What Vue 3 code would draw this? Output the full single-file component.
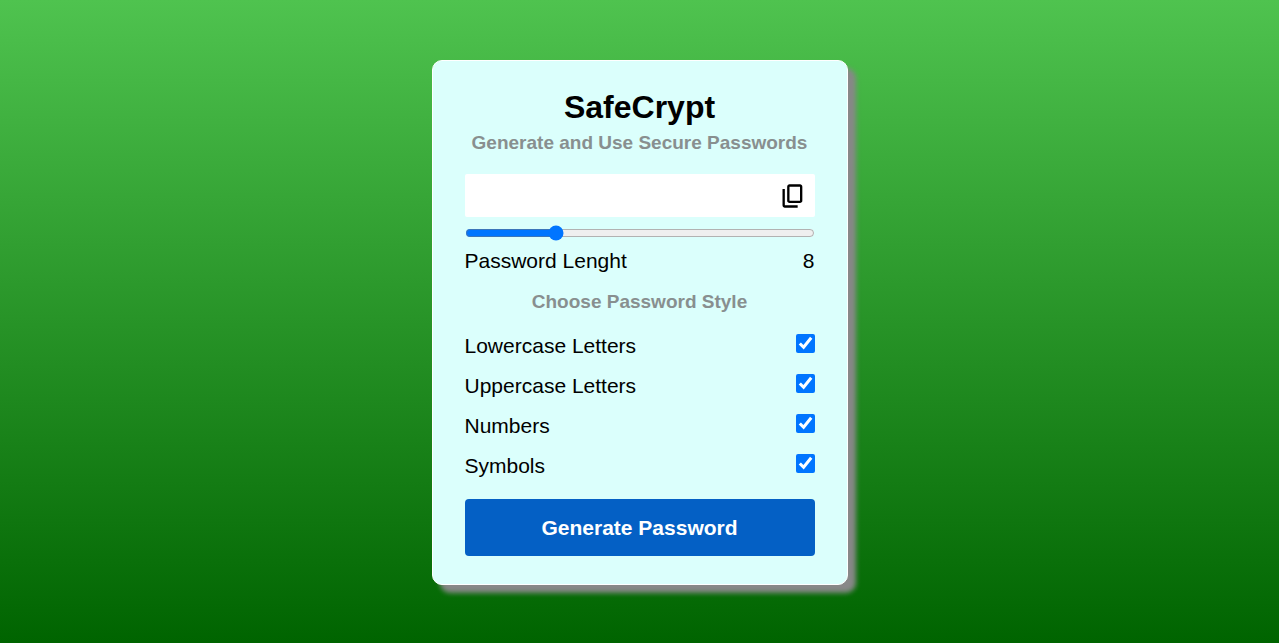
<script setup>
import { ref, reactive } from 'vue'

const password = ref('')
const length = ref(8)
const options = reactive([
  { id: 'lowercase', label: 'Lowercase Letters', chars: 'abcdefghijklmnopqrstuvwxyz', on: true },
  { id: 'uppercase', label: 'Uppercase Letters', chars: 'ABCDEFGHIJKLMNOPQRSTUVWXYZ', on: true },
  { id: 'numbers', label: 'Numbers', chars: '0123456789', on: true },
  { id: 'symbols', label: 'Symbols', chars: '!@#$%^&*()[]{}=<>/.', on: true },
])

function generate() {
  const pool = options.filter((o) => o.on).map((o) => o.chars).join('')
  let result = ''
  for (let i = 0; pool && i < length.value; i++) {
    result += pool[Math.floor(Math.random() * pool.length)]
  }
  password.value = result
}

function copy() {
  navigator.clipboard?.writeText(password.value)
}
</script>

<template>
  <main class="page">
    <form class="card" @submit.prevent="generate">
      <h1 class="title">SafeCrypt</h1>
      <h2 class="subtitle">Generate and Use Secure Passwords</h2>

      <div class="output">
        <input v-model="password" class="password" type="text" aria-label="Password" readonly />
        <button class="copy" type="button" aria-label="Copy password" @click="copy">
          <svg viewBox="0 -960 960 960" width="28" height="28" aria-hidden="true">
            <path d="M360-240q-33 0-56.500-23.500T280-320v-480q0-33 23.500-56.500T360-880h360q33 0 56.500 23.500T800-800v480q0 33-23.500 56.500T720-240H360Zm0-80h360v-480H360v480ZM200-80q-33 0-56.500-23.500T120-160v-560h80v560h440v80H200Z" />
          </svg>
        </button>
      </div>

      <input id="length" v-model.number="length" class="slider" type="range" min="4" max="20" />
      <div class="row">
        <label for="length">Password Lenght</label>
        <span>{{ length }}</span>
      </div>

      <h2 class="subtitle section">Choose Password Style</h2>

      <div v-for="option in options" :key="option.id" class="row option">
        <label :for="option.id">{{ option.label }}</label>
        <input :id="option.id" v-model="option.on" class="check" type="checkbox" />
      </div>

      <button class="generate" type="submit">Generate Password</button>
    </form>
  </main>
</template>

<style>
body {
  margin: 0;
}
</style>

<style scoped>
.page {
  box-sizing: border-box;
  min-height: 100vh;
  padding: 60px 16px 58px;
  display: flex;
  justify-content: center;
  align-items: flex-start;
  background: linear-gradient(#4fc34f, #006400);
  font-family: "Liberation Sans", Arial, sans-serif;
  font-size: 21px;
  color: #000;
}

.card {
  box-sizing: border-box;
  width: 100%;
  max-width: 416px;
  padding: 28px 32px;
  border: 1px solid #fff;
  border-radius: 10px;
  background: #dbfffc;
  box-shadow: 8px 8px 5px #888;
}

.title {
  margin: 0;
  font-size: 32px;
  line-height: 37px;
  text-align: center;
}

.subtitle {
  margin: 6px 0 20px;
  font-size: 19px;
  line-height: 22px;
  text-align: center;
  color: #888f8f;
}

.output {
  display: flex;
  align-items: center;
  height: 43px;
  border-radius: 2px;
  background: #fff;
}

.password {
  flex: 1;
  min-width: 0;
  padding: 8px 12px;
  border: 0;
  background: none;
  font: inherit;
  outline: none;
}

.copy {
  display: flex;
  padding: 0 8px;
  border: 0;
  background: none;
  cursor: pointer;
}

.slider {
  display: block;
  width: 100%;
  height: 16px;
  margin: 8px 0;
  accent-color: #0075ff;
}

.row {
  display: flex;
  justify-content: space-between;
  line-height: 24px;
}

.section {
  margin: 18px 0 12px;
}

.option {
  height: 40px;
  line-height: 42px;
}

.check {
  width: 19px;
  height: 19px;
  margin: 9px 0;
  accent-color: #0075ff;
}

.generate {
  display: block;
  width: 100%;
  height: 57px;
  margin-top: 14px;
  border: 0;
  border-radius: 4px;
  background: #0460c5;
  color: #fff;
  font: bold 21px "Liberation Sans", Arial, sans-serif;
  cursor: pointer;
}
</style>
